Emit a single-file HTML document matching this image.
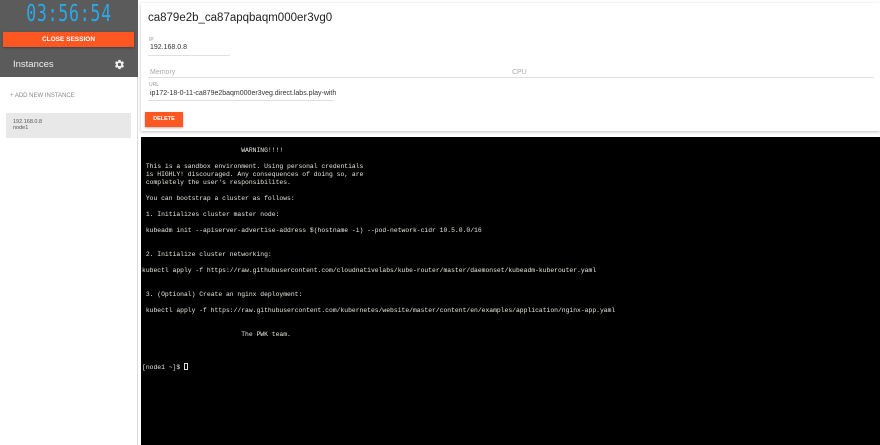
<!DOCTYPE html>
<html><head><style>
*{margin:0;padding:0;box-sizing:border-box}
body{width:880px;height:445px;overflow:hidden;background:#fff;font-family:"Liberation Sans",sans-serif;position:relative}
.side{position:absolute;left:0;top:0;width:138px;height:445px;background:#fff;border-right:1px solid #ddd}
.head{position:absolute;left:0;top:0;width:138px;height:77px;background:#5b5b5b}
.clock{position:absolute;left:0;top:1px;width:138px;text-align:center;color:#2aa9e8;font-family:"DejaVu Sans Mono","Liberation Mono",monospace;font-size:23px;letter-spacing:1px;line-height:26px;transform:scaleX(0.72);font-weight:300}
.close{position:absolute;left:3px;top:32px;width:131px;height:15px;background:#fe5722;color:#fff;font-size:6.5px;font-weight:bold;text-align:center;line-height:15px;box-shadow:0 1px 2px rgba(0,0,0,.3)}
.inst{position:absolute;left:13px;top:59px;color:#eee;font-size:9.5px}
.gear{position:absolute;left:114px;top:59px}
.add{position:absolute;left:10px;top:93px;color:#888;font-size:6px}
.node{position:absolute;left:6px;top:113px;width:125px;height:25px;background:#e8e8e8;font-size:5.5px;color:#555;padding:6px 0 0 7px;line-height:6px}
.main{position:absolute;left:141px;top:3px;width:739px;height:128px;background:#fff;box-shadow:0 1px 3px rgba(0,0,0,.25)}
.title{position:absolute;left:148px;top:12px;font-size:11.5px;color:#222}
.lbl{position:absolute;font-size:5px;color:#999}
.val{position:absolute;font-size:7px;color:#333}
.line{position:absolute;height:1px;background:#e0e0e0}
.del{position:absolute;left:145px;top:112px;width:38px;height:15px;background:#fe5722;color:#fff;font-size:5.5px;font-weight:bold;text-align:center;line-height:15px;box-shadow:0 1px 2px rgba(0,0,0,.3)}
.term{position:absolute;left:141px;top:137px;width:739px;height:308px;background:#000;padding:10px 0 0 1px}
.term pre{font-family:"Liberation Mono",monospace;font-size:6.37px;line-height:8px;color:#e8e8e0}
.cur{display:inline-block;width:4px;height:7px;border:1px solid #ddd;vertical-align:-1px}
</style></head><body>
<div class="side">
<div class="head">
<div class="clock">03:56:54</div>
<div class="close">CLOSE SESSION</div>
<div class="inst">Instances</div>
<svg class="gear" width="11" height="11" viewBox="0 0 24 24"><path fill="#eee" d="M19.4 13c.04-.33.06-.66.06-1s-.02-.67-.06-1l2.1-1.65c.2-.15.25-.42.12-.64l-2-3.46c-.12-.22-.39-.3-.61-.22l-2.5 1a7.3 7.3 0 0 0-1.7-1l-.37-2.650A.5.5 0 0 0 14 2h-4a.5.5 0 0 0-.5.42l-.37 2.65c-.6.25-1.170.59-1.7 1l-2.5-1c-.22-.09-.49 0-.61.22l-2 3.46c-.13.22-.07.49.12.64L4.57 11c-.04.33-.07.67-.07 1s.03.67.07 1l-2.11 1.65c-.19.15-.24.42-.12.64l2 3.46c.12.22.39.3.61.22l2.5-1c.52.4 1.08.74 1.7 1l.37 2.65c.04.24.25.42.5.42h4c.25 0 .46-.18.5-.42l.37-2.65c.6-.25 1.17-.59 1.7-1l2.5 1c.22.08.49 0 .61-.22l2-3.46c.12-.22.07-.49-.12-.64L19.4 13zM12 15.5A3.5 3.5 0 1 1 12 8.5a3.5 3.5 0 0 1 0 7z"/></svg>
</div>
<div class="add">+ ADD NEW INSTANCE</div>
<div class="node">192.168.0.8<br>node1</div>
</div>
<div class="main"></div>
<div class="title">ca879e2b_ca87apqbaqm000er3vg0</div>
<div class="lbl" style="left:149px;top:37px">IP</div>
<div class="val" style="left:150px;top:44px">192.168.0.8</div>
<div class="line" style="left:148px;top:55px;width:82px"></div>
<div class="lbl" style="left:150px;top:69px;font-size:7px;color:#aaa">Memory</div>
<div class="lbl" style="left:512px;top:69px;font-size:7px;color:#aaa">CPU</div>
<div class="line" style="left:148px;top:77px;width:726px"></div>
<div class="lbl" style="left:149px;top:82px">URL</div>
<div class="val" style="left:150px;top:90px">ip172-18-0-11-ca879e2baqm000er3veg.direct.labs.play-with</div>
<div class="line" style="left:148px;top:100px;width:186px"></div>
<div class="del">DELETE</div>
<div class="term"><pre>                          WARNING!!!!

 This is a sandbox environment. Using personal credentials
 is HIGHLY! discouraged. Any consequences of doing so, are
 completely the user's responsibilites.

 You can bootstrap a cluster as follows:

 1. Initializes cluster master node:

 kubeadm init --apiserver-advertise-address $(hostname -i) --pod-network-cidr 10.5.0.0/16


 2. Initialize cluster networking:

kubectl apply -f https://raw.githubusercontent.com/cloudnativelabs/kube-router/master/daemonset/kubeadm-kuberouter.yaml


 3. (Optional) Create an nginx deployment:

 kubectl apply -f https://raw.githubusercontent.com/kubernetes/website/master/content/en/examples/application/nginx-app.yaml


                          The PWK team.



[node1 ~]$ <span class="cur"></span></pre></div>
</body></html>
